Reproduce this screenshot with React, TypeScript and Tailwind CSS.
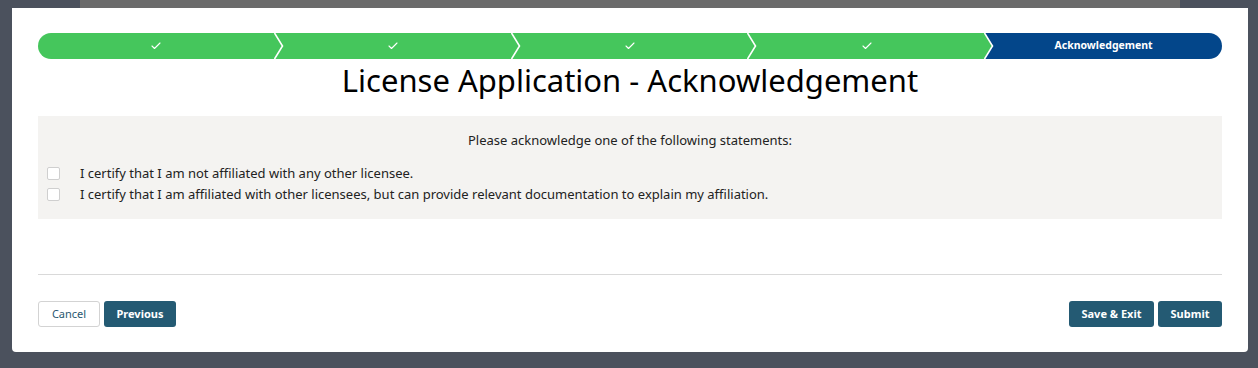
import { Check } from "lucide-react";

const steps = ["", "", "", "", "Acknowledgement"];

function Chevron({ fill }: { fill: string }) {
  return (
    <svg
      className="absolute top-0 right-[-9px] z-10 h-[26px] w-[10px]"
      viewBox="0 0 10 26"
    >
      <polygon points="0,0 8,13 0,26" fill={fill} />
      <polyline points="0.5,0 8.5,13 0.5,26" fill="none" stroke="#fff" strokeWidth="1.6" />
    </svg>
  );
}

export default function App() {
  return (
    <div className="h-[368px] w-[1258px] bg-[#4b515d] font-['Noto_Sans',sans-serif]">
      <div className="ml-[80px] h-[8px] w-[1100px] bg-[#6b6b6b]" />
      <div className="ml-[12px] flex h-[344px] w-[1236px] flex-col rounded-b-[4px] bg-white px-[26px] pt-[25px]">
        <div className="flex h-[26px] overflow-hidden rounded-full">
          {steps.map((label, i) => {
            const done = i < 4;
            return (
              <div
                key={i}
                className={
                  "relative flex flex-1 items-center justify-center " +
                  (done ? "bg-[#45c65c]" : "bg-[#03468a]")
                }
              >
                {done ? (
                  <Check className="h-[12px] w-[12px] text-white" strokeWidth={2.2} />
                ) : (
                  <span className="text-[10.5px] font-bold text-white">{label}</span>
                )}
                {i < 4 && <Chevron fill="#45c65c" />}
              </div>
            );
          })}
        </div>

        <h1 className="mt-[3px] text-center text-[31px] leading-[36px] text-black">
          License Application - Acknowledgement
        </h1>

        <div className="mt-[18px] h-[103px] bg-[#f4f3f1] pt-[15px] text-[13px] text-[#222]">
          <p className="text-center leading-[18px]">
            Please acknowledge one of the following statements:
          </p>
          <div className="mt-[15px] flex flex-col gap-[3px] pl-[9px]">
            <label className="flex items-center leading-[18px]">
              <span className="h-[13px] w-[13px] rounded-[2px] border border-[#cfcfcf] bg-white" />
              <span className="ml-[20px]">I certify that I am not affiliated with any other licensee.</span>
            </label>
            <label className="flex items-center leading-[18px]">
              <span className="h-[13px] w-[13px] rounded-[2px] border border-[#cfcfcf] bg-white" />
              <span className="ml-[20px]">
                I certify that I am affiliated with other licensees, but can provide relevant documentation to explain my affiliation.
              </span>
            </label>
          </div>
        </div>

        <div className="mt-[55px] h-px bg-[#d9d9d9]" />

        <div className="mt-[26px] flex items-center justify-between text-[11px]">
          <div className="flex gap-[4px]">
            <button className="h-[26px] w-[62px] rounded-[3px] border border-[#d3d3d3] bg-white text-[#2a5870]">
              Cancel
            </button>
            <button className="h-[26px] w-[72px] rounded-[3px] bg-[#245a73] font-bold text-white">
              Previous
            </button>
          </div>
          <div className="flex gap-[4px]">
            <button className="h-[26px] w-[85px] rounded-[3px] bg-[#245a73] font-bold text-white">
              Save &amp; Exit
            </button>
            <button className="h-[26px] w-[64px] rounded-[3px] bg-[#245a73] font-bold text-white">
              Submit
            </button>
          </div>
        </div>
      </div>
    </div>
  );
}
